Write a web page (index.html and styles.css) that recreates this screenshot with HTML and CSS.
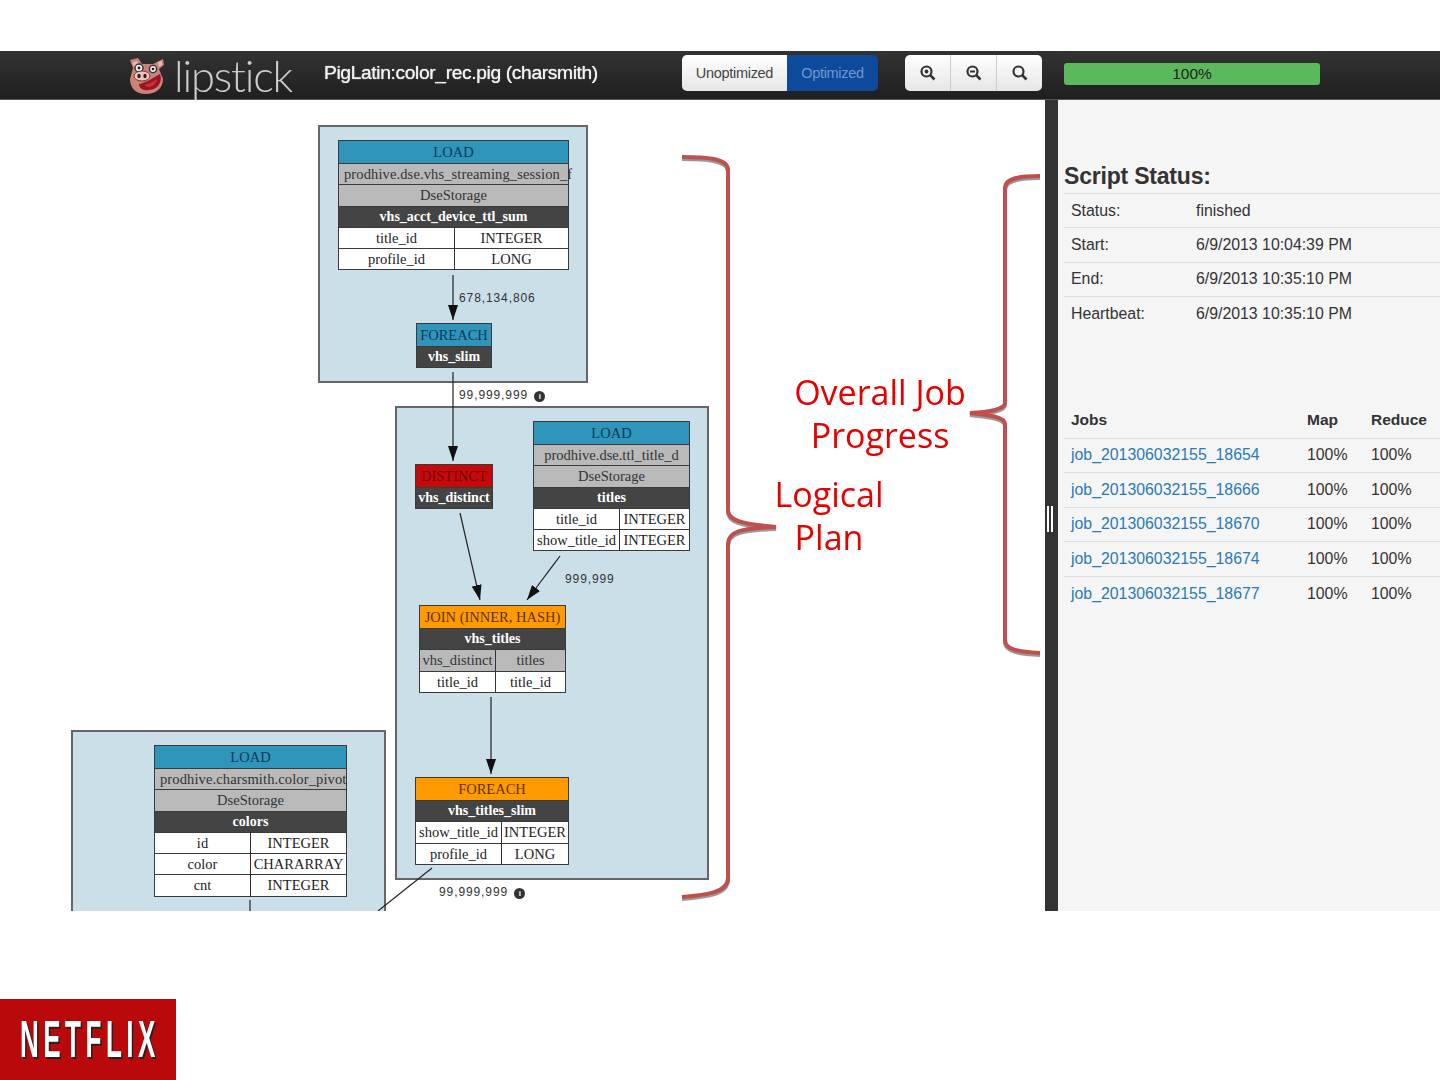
FILE: index.html
```html
<!DOCTYPE html>
<html lang="en">
<head>
    <meta charset="UTF-8">
    <title>Lipstick - Logical Plan</title>
    <link rel="stylesheet" href="styles.css">
</head>
<body>
<div class="slide">
    <div class="app">
        <header class="topbar">
            <svg class="pig" viewBox="0 0 40 40" width="40" height="40">
                <path d="M3 5 L11 3 L15 9 L26 9 L36 4 L37 10 L32 14 L36 24 C36 34 28 39 19 39 C9 39 3 33 3 24 L6 13 Z" fill="#c98479"/>
                <path d="M5 8 L10 6 L13 10 L8 13 Z" fill="#e8b9ae"/>
                <path d="M31 7 L35 6 L35 10 L32 12 Z" fill="#e8b9ae"/>
                <circle cx="12" cy="13" r="4" fill="#eee" stroke="#333" stroke-width="1.4"/>
                <circle cx="12" cy="13" r="1.4" fill="#222"/>
                <circle cx="26" cy="14" r="3.6" fill="#eee" stroke="#333" stroke-width="1.4"/>
                <circle cx="26" cy="14" r="1.3" fill="#222"/>
                <ellipse cx="15" cy="21" rx="8" ry="5" fill="#edc8bf" stroke="#6e3d38" stroke-width="1"/>
                <ellipse cx="12" cy="21" rx="1.7" ry="2.2" fill="#3a1d1b"/>
                <ellipse cx="18" cy="21" rx="1.7" ry="2.2" fill="#3a1d1b"/>
                <path d="M12 29 C18 28 26 23 33 19 C36 26 31 35 22 35 C16 36 12 33 12 29 Z" fill="#9c1420"/>
                <path d="M17 30 C22 29 27 26 30 24 C30 29 25 32 21 32 Z" fill="#c9303a"/>
            </svg>
            <span class="logo-text">lipstick</span>
            <span class="script-title">PigLatin:color_rec.pig (charsmith)</span>
            <div class="btn-group view-group">
                <button class="btn">Unoptimized</button>
                <button class="btn btn-active">Optimized</button>
            </div>
            <div class="btn-group zoom-group">
                <button class="btn btn-icon">
                    <svg viewBox="0 0 18 18" width="18" height="18"><circle cx="7.5" cy="7.5" r="5" fill="none" stroke="#333" stroke-width="2.2"/><circle cx="7.5" cy="7.5" r="1.9" fill="#333"/><line x1="11.2" y1="11.2" x2="15.5" y2="15.5" stroke="#333" stroke-width="2.6"/></svg>
                </button>
                <button class="btn btn-icon">
                    <svg viewBox="0 0 18 18" width="18" height="18"><circle cx="7.5" cy="7.5" r="5" fill="none" stroke="#333" stroke-width="2.2"/><line x1="5" y1="7.5" x2="10" y2="7.5" stroke="#333" stroke-width="2"/><line x1="11.2" y1="11.2" x2="15.5" y2="15.5" stroke="#333" stroke-width="2.6"/></svg>
                </button>
                <button class="btn btn-icon">
                    <svg viewBox="0 0 18 18" width="18" height="18"><circle cx="7.5" cy="7.5" r="5" fill="none" stroke="#333" stroke-width="2.2"/><line x1="11.2" y1="11.2" x2="15.5" y2="15.5" stroke="#333" stroke-width="2.6"/></svg>
                </button>
            </div>
            <div class="progress">100%</div>
        </header>

        <div class="main">
            <div class="canvas">
                <div class="cluster cluster-a"></div>
                <div class="cluster cluster-b"></div>
                <div class="cluster cluster-c"></div>

                <svg class="edges" viewBox="0 100 1045 811" width="1045" height="811">
                    <defs>
                        <marker id="arrow" viewBox="0 0 15 10" refX="15" refY="5" markerWidth="15" markerHeight="10" markerUnits="userSpaceOnUse" orient="auto">
                            <path d="M0 0 L15 5 L0 10 Z" fill="#111"/>
                        </marker>
                    </defs>
                    <g stroke="#222" stroke-width="1.2" fill="none">
                        <line x1="453" y1="275" x2="453" y2="320" marker-end="url(#arrow)"/>
                        <line x1="453" y1="372" x2="453" y2="461" marker-end="url(#arrow)"/>
                        <line x1="460" y1="513" x2="480" y2="600" marker-end="url(#arrow)"/>
                        <line x1="560" y1="556" x2="527" y2="600" marker-end="url(#arrow)"/>
                        <line x1="491" y1="697" x2="491" y2="774" marker-end="url(#arrow)"/>
                        <line x1="250" y1="900" x2="250" y2="911"/>
                        <line x1="432" y1="868" x2="378" y2="911"/>
                    </g>
                </svg>

                <div class="node node-a">
                    <div class="cell head load wide">LOAD</div>
                    <div class="cell store wide clip">prodhive.dse.vhs_streaming_session_f</div>
                    <div class="cell store wide">DseStorage</div>
                    <div class="cell alias wide">vhs_acct_device_ttl_sum</div>
                    <div class="cell split">title_id</div><div class="cell">INTEGER</div>
                    <div class="cell split">profile_id</div><div class="cell">LONG</div>
                </div>
                <div class="node node-b">
                    <div class="cell head load wide">FOREACH</div>
                    <div class="cell alias wide">vhs_slim</div>
                </div>
                <div class="node node-c">
                    <div class="cell head distinct wide">DISTINCT</div>
                    <div class="cell alias wide">vhs_distinct</div>
                </div>
                <div class="node node-d">
                    <div class="cell head load wide">LOAD</div>
                    <div class="cell store wide">prodhive.dse.ttl_title_d</div>
                    <div class="cell store wide">DseStorage</div>
                    <div class="cell alias wide">titles</div>
                    <div class="cell split">title_id</div><div class="cell">INTEGER</div>
                    <div class="cell split">show_title_id</div><div class="cell">INTEGER</div>
                </div>
                <div class="node node-e">
                    <div class="cell head join wide">JOIN (INNER, HASH)</div>
                    <div class="cell alias wide">vhs_titles</div>
                    <div class="cell store split">vhs_distinct</div><div class="cell store">titles</div>
                    <div class="cell split">title_id</div><div class="cell">title_id</div>
                </div>
                <div class="node node-f">
                    <div class="cell head join wide">FOREACH</div>
                    <div class="cell alias wide">vhs_titles_slim</div>
                    <div class="cell split">show_title_id</div><div class="cell">INTEGER</div>
                    <div class="cell split">profile_id</div><div class="cell">LONG</div>
                </div>
                <div class="node node-g">
                    <div class="cell head load wide">LOAD</div>
                    <div class="cell store wide clip">prodhive.charsmith.color_pivot</div>
                    <div class="cell store wide">DseStorage</div>
                    <div class="cell alias wide">colors</div>
                    <div class="cell split">id</div><div class="cell">INTEGER</div>
                    <div class="cell split">color</div><div class="cell">CHARARRAY</div>
                    <div class="cell split">cnt</div><div class="cell">INTEGER</div>
                </div>

                <span class="edge-label label-a">678,134,806</span>
                <span class="edge-label label-b">99,999,999 <i class="info">i</i></span>
                <span class="edge-label label-c">999,999</span>
                <span class="edge-label label-d">99,999,999 <i class="info">i</i></span>
            </div>

            <div class="divider"><span class="grip"></span></div>

            <aside class="side">
                <h2>Script Status:</h2>
                <table class="status-table">
                    <tr><td class="key">Status:</td><td>finished</td></tr>
                    <tr><td class="key">Start:</td><td>6/9/2013 10:04:39 PM</td></tr>
                    <tr><td class="key">End:</td><td>6/9/2013 10:35:10 PM</td></tr>
                    <tr><td class="key">Heartbeat:</td><td>6/9/2013 10:35:10 PM</td></tr>
                </table>
                <table class="jobs-table">
                    <tr><th class="job">Jobs</th><th class="map">Map</th><th>Reduce</th></tr>
                    <tr><td class="job"><a href="#">job_201306032155_18654</a></td><td class="map">100%</td><td>100%</td></tr>
                    <tr><td class="job"><a href="#">job_201306032155_18666</a></td><td class="map">100%</td><td>100%</td></tr>
                    <tr><td class="job"><a href="#">job_201306032155_18670</a></td><td class="map">100%</td><td>100%</td></tr>
                    <tr><td class="job"><a href="#">job_201306032155_18674</a></td><td class="map">100%</td><td>100%</td></tr>
                    <tr><td class="job"><a href="#">job_201306032155_18677</a></td><td class="map">100%</td><td>100%</td></tr>
                </table>
            </aside>
        </div>
    </div>

    <svg class="braces" viewBox="0 0 1440 1080" width="1440" height="1080">
        <g fill="none" stroke-width="4">
            <path class="brace-shadow" d="M682 159 C705 159 728 160 728 172 L728 512 C728 522 740 526 776 529 C740 530 728 534 728 546 L728 880 C728 895 705 897 682 899"/>
            <path class="brace" d="M682 157 C705 157 728 158 728 170 L728 510 C728 520 740 524 776 527 C740 528 728 532 728 544 L728 878 C728 893 705 895 682 897"/>
            <path class="brace-shadow" d="M1040 178 C1020 178 1005 180 1005 190 L1005 405 C1005 411 990 414 970 415 C990 417 1005 419 1005 426 L1005 642 C1005 652 1020 654 1040 655"/>
            <path class="brace" d="M1040 176 C1020 176 1005 178 1005 188 L1005 403 C1005 409 990 412 970 413 C990 415 1005 417 1005 424 L1005 640 C1005 650 1020 652 1040 653"/>
        </g>
    </svg>
    <div class="note note-job">Overall Job<br>Progress</div>
    <div class="note note-plan">Logical<br>Plan</div>

    <div class="netflix"><span>NETFLIX</span></div>
</div>
</body>
</html>
```

FILE: styles.css
```css
body {
    margin: 0;
    background-color: #fff;
    font-family: "Liberation Sans", Arial, sans-serif;
}
.slide {
    position: relative;
    width: 1440px;
    height: 1080px;
    padding-top: 51px;
    box-sizing: border-box;
    overflow: hidden;
}
.app {
    height: 860px;
    display: flex;
    flex-direction: column;
    filter: blur(0.35px);
}

/* top bar */
.topbar {
    height: 49px;
    flex: none;
    display: flex;
    align-items: center;
    padding-left: 127px;
    box-sizing: border-box;
    background: linear-gradient(#333, #1f1f1f);
    border-bottom: 1px solid #555;
}
.pig {
    flex: none;
}
.logo-text {
    margin-left: 7px;
    width: 150px;
    font-family: Lato, sans-serif;
    font-weight: 300;
    font-size: 43.5px;
    line-height: 49px;
    letter-spacing: -1.2px;
    color: #ccc;
}
.script-title {
    width: 358px;
    margin-top: -4px;
    font-size: 19.2px;
    letter-spacing: -0.35px;
    color: #f2f2f2;
    text-shadow: 0 0 1px #fff;
}
.btn-group {
    display: flex;
    height: 36px;
    margin-top: -4px;
    border-radius: 5px;
    overflow: hidden;
}
.btn {
    border: none;
    padding: 0;
    font-family: inherit;
    font-size: 14.5px;
    letter-spacing: -0.3px;
    color: #444;
    background: linear-gradient(#fff, #e6e6e6);
}
.view-group .btn {
    width: 105px;
}
.view-group .btn-active {
    width: 91px;
    color: #6f97cc;
    background: #0d4a9c;
}
.zoom-group {
    margin-left: 27px;
}
.btn-icon {
    width: 46px;
    display: flex;
    align-items: center;
    justify-content: center;
    border-right: 1px solid #ccc;
}
.btn-icon:last-child {
    width: 45px;
    border-right: none;
}
.progress {
    width: 256px;
    height: 22px;
    margin-left: 22px;
    margin-top: -2px;
    border-radius: 3px;
    background-color: #5cb85c;
    color: #222;
    font-size: 15.5px;
    line-height: 22px;
    text-align: center;
}

/* graph */
.main {
    flex: 1;
    display: flex;
    min-height: 0;
}
.canvas {
    position: relative;
    width: 1045px;
    flex: none;
    overflow: hidden;
    background-color: #fff;
}
.cluster {
    position: absolute;
    box-sizing: border-box;
    background-color: #cbdfe8;
    border: 2px solid #666;
}
.cluster-a { left: 318px; top: 25px; width: 270px; height: 258px; }
.cluster-b { left: 395px; top: 306px; width: 314px; height: 474px; }
.cluster-c { left: 71px; top: 630px; width: 315px; height: 400px; }
.edges {
    position: absolute;
    left: 0;
    top: 0;
}
.node {
    position: absolute;
    display: grid;
    box-sizing: border-box;
    border: 1px solid #3a3a3a;
    border-bottom-width: 0;
    font-family: "Liberation Serif", "Times New Roman", serif;
    font-size: 14.5px;
    color: #222;
    background-color: #fff;
}
.node-a { left: 338px; top: 40px; width: 231px; grid-template-columns: 116px 1fr; }
.node-b { left: 416px; top: 223px; width: 76px; grid-template-columns: 1fr; }
.node-c { left: 415px; top: 364px; width: 78px; grid-template-columns: 1fr; }
.node-d { left: 533px; top: 321px; width: 157px; grid-template-columns: 86px 1fr; }
.node-e { left: 419px; top: 505px; width: 147px; grid-template-columns: 76px 1fr; }
.node-f { left: 415px; top: 677px; width: 154px; grid-template-columns: 86px 1fr; }
.node-g { left: 154px; top: 645px; width: 193px; grid-template-columns: 96px 1fr; }
.cell {
    height: 21.3px;
    box-sizing: border-box;
    border-bottom: 1.3px solid #3a3a3a;
    line-height: 20px;
    text-align: center;
    white-space: nowrap;
    overflow: hidden;
}
.wide {
    grid-column: 1 / -1;
}
.split {
    border-right: 1.3px solid #333;
}
.head {
    height: 23px;
    line-height: 22px;
}
.load {
    background-color: #2f95ba;
    color: #0c3a5a;
}
.distinct {
    background-color: #c40a0a;
    color: #700;
}
.join {
    background-color: #ff9b00;
    color: #5e3000;
}
.store {
    background-color: #b9b9b9;
    color: #333;
}
.clip {
    padding-left: 5px;
    text-align: left;
    letter-spacing: 0.12px;
    overflow: visible;
}
.alias {
    background-color: #444;
    color: #fff;
    font-weight: bold;
    font-size: 14px;
}
.edge-label {
    position: absolute;
    font-size: 12px;
    letter-spacing: 0.9px;
    color: #333;
    white-space: nowrap;
}
.label-a { left: 459px; top: 191px; }
.label-b { left: 459px; top: 288px; }
.label-c { left: 565px; top: 472px; }
.label-d { left: 439px; top: 785px; }
.info {
    display: inline-block;
    width: 11px;
    height: 11px;
    margin-left: 2px;
    border-radius: 50%;
    background-color: #333;
    color: #fff;
    font: bold 8px/11px "Liberation Sans", sans-serif;
    letter-spacing: 0;
    text-align: center;
    vertical-align: 0;
}
.divider {
    position: relative;
    width: 13px;
    flex: none;
    background-color: #333;
}
.grip {
    position: absolute;
    left: 2px;
    top: 406px;
    width: 2px;
    height: 26px;
    border-left: 2.5px solid #fff;
    border-right: 2.5px solid #fff;
}

/* right panel */
.side {
    flex: 1;
    padding: 62px 0 0 6px;
    background-color: #f5f5f5;
    color: #333;
    font-size: 15.85px;
}
.side h2 {
    margin: 0;
    height: 31px;
    font-size: 23px;
    line-height: 28px;
    letter-spacing: -0.2px;
    color: #333;
}
.side table {
    width: 100%;
    border-collapse: collapse;
}
.side td, .side th {
    height: 34.4px;
    box-sizing: border-box;
    padding: 0 0 0 7px;
    border-top: 1px solid #ddd;
    text-align: left;
}
.status-table .key {
    width: 125px;
}
.jobs-table {
    margin-top: 72px;
}
.side .jobs-table th {
    height: 35px;
    border-top: none;
    font-size: 15.5px;
}
.side .jobs-table td {
    height: 34.5px;
}
.jobs-table .job {
    width: 236px;
}
.jobs-table .map {
    width: 64px;
}
.jobs-table a {
    color: #2a7ab8;
    text-decoration: none;
}

/* annotations over the screenshot */
.braces {
    position: absolute;
    left: 0;
    top: 0;
    pointer-events: none;
}
.brace {
    stroke: #c0504d;
}
.brace-shadow {
    stroke: #999;
}
.note {
    position: absolute;
    font-family: "Open Sans", sans-serif;
    font-size: 34px;
    line-height: 43px;
    color: #e60000;
    text-align: center;
}
.note-job { left: 780px; top: 371px; width: 200px; }
.note-plan { left: 729px; top: 473px; width: 200px; }

.netflix {
    position: absolute;
    left: 0;
    top: 999px;
    width: 176px;
    height: 81px;
    background-color: #b9090b;
    overflow: hidden;
}
.netflix span {
    position: absolute;
    left: 20px;
    top: 10px;
    font-weight: bold;
    font-size: 52px;
    line-height: 60px;
    letter-spacing: 9px;
    color: #fff;
    text-shadow: 3px 2px 0 #222;
    transform: scaleX(0.5);
    transform-origin: left top;
    white-space: nowrap;
}
```
